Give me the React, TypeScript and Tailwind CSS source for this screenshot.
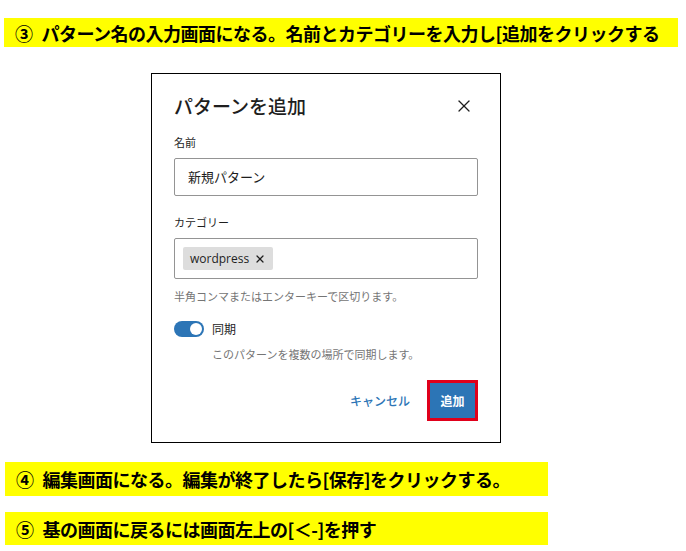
import { X } from 'lucide-react';

const jp = { fontFamily: '"Noto Sans CJK JP", "Noto Sans", sans-serif' };

const Banner = ({ num, text, className }: { num: string; text: string; className: string }) => (
  <div
    className={`bg-[#ffff00] text-black font-bold text-[18px] leading-none flex items-center gap-[9px] pl-[11px] tracking-[-0.5px] ${className}`}
  >
    <span>{num}</span>
    <span>{text}</span>
  </div>
);

const App = () => {
  return (
    <div className="w-[686px] h-[551px] bg-white relative" style={jp}>
      <div className="pt-[18px] pl-[4px]">
        <Banner className="w-[674px] h-[29px]" num="③" text="パターン名の入力画面になる。名前とカテゴリーを入力し[追加をクリックする" />
      </div>

      <div className="ml-[151px] mt-[26px] w-[350px] h-[370px] border border-black bg-white px-[22px] pt-[18px]">
        <div className="flex items-center justify-between h-[28px]">
          <h2 className="text-[19px] font-medium text-[#1e1e1e]">パターンを追加</h2>
          <X className="w-[20px] h-[20px] text-[#1e1e1e] mr-[4px]" strokeWidth={1.5} />
        </div>

        <div className="mt-[15px] text-[11px] text-[#1e1e1e] h-[14px] leading-[14px]">名前</div>
        <div className="mt-[9px] h-[38px] border border-[#949494] rounded-[2px] flex items-center pl-[13px] text-[13px] text-[#1e1e1e]">
          新規パターン
        </div>

        <div className="mt-[19px] text-[11px] text-[#1e1e1e] h-[14px] leading-[14px]">カテゴリー</div>
        <div className="mt-[9px] h-[41px] border border-[#949494] rounded-[2px] flex items-center pl-[8px]">
          <span className="h-[23px] bg-[#dddddd] rounded-[2px] flex items-center px-[7px] gap-[5px] text-[12px] text-[#1e1e1e]" style={{ fontFamily: '"Open Sans", "Noto Sans", sans-serif' }}>
            wordpress
            <X className="w-[12px] h-[12px]" strokeWidth={2.5} />
          </span>
        </div>
        <div className="mt-[9px] text-[11px] text-[#757575]">半角コンマまたはエンターキーで区切ります。</div>

        <div className="mt-[15px] flex items-center gap-[8px]">
          <div className="w-[30px] h-[16px] rounded-full bg-[#2c75b6] relative">
            <div className="absolute right-[2px] top-[2px] w-[12px] h-[12px] rounded-full bg-white" />
          </div>
          <span className="text-[12px] text-[#1e1e1e]">同期</span>
        </div>
        <div className="mt-[8px] ml-[38px] text-[11px] text-[#757575]">このパターンを複数の場所で同期します。</div>

        <div className="mt-[18px] flex items-center justify-end gap-[17px]">
          <span className="text-[12px] text-[#2c75b6] font-medium">キャンセル</span>
          <div className="w-[51px] h-[41px] border-[3px] border-[#e0001b] bg-[#2c75b6] flex items-center justify-center text-white text-[12px] font-bold">
            追加
          </div>
        </div>
      </div>

      <div className="mt-[19px] pl-[5px]">
        <Banner className="w-[543px] h-[34px]" num="④" text="編集画面になる。編集が終了したら[保存]をクリックする。" />
      </div>
      <div className="mt-[16px] pl-[5px]">
        <Banner className="w-[543px] h-[33px]" num="⑤" text="基の画面に戻るには画面左上の[＜-]を押す" />
      </div>
    </div>
  );
};

export default App;
